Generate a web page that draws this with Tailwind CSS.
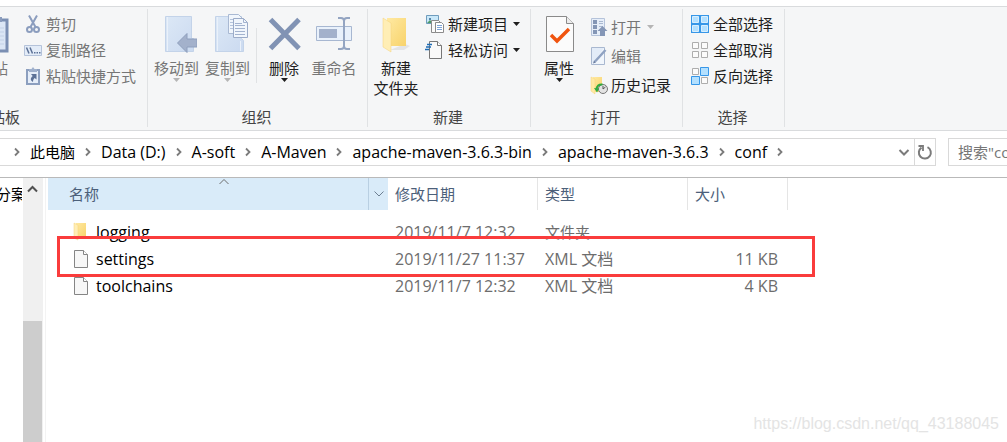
<!DOCTYPE html>
<html lang="zh-CN">
<head>
    <meta charset="UTF-8">
    <meta name="viewport" content="width=device-width, initial-scale=1.0">
    <title>conf</title>
    <script src="https://cdn.jsdelivr.net/npm/@tailwindcss/browser@4"></script>
</head>
<body class="min-h-screen flex flex-col bg-white overflow-hidden whitespace-nowrap font-['Open_Sans','Noto_Sans_CJK_SC',sans-serif] text-[15px] leading-5 text-[#1e1e1e]">

    <!-- Shared shapes -->
    <svg class="absolute size-0">
        <symbol id="crumb" viewBox="0 0 26 10"><path d="M11 1.500 14.500 5 11 8.500" fill="none" stroke="#7b7b7b" stroke-width="1.800"/></symbol>
        <symbol id="caret" viewBox="0 0 7 4"><path d="M0 0h7L3.500 4z" fill="currentColor"/></symbol>
        <symbol id="file" viewBox="0 0 16 20">
            <path d="M1.500 1.500h9l4 4v13h-13z" fill="#f7f7f7" stroke="#858585"/>
            <path d="M10.500 1.500v4h4" fill="#fff" stroke="#858585"/>
        </symbol>
        <linearGradient id="yellow" x1="0" x2="1" y1="0" y2="1"><stop stop-color="#ffe9a2"/><stop offset="1" stop-color="#f8d36b"/></linearGradient>
        <linearGradient id="book" x1="0" x2="1" y1="0" y2="1"><stop stop-color="#dce8f6"/><stop offset="1" stop-color="#cbdaf0"/></linearGradient>
    </svg>

    <!-- Ribbon -->
    <div class="mt-[6px] flex border-y border-[#d9dbdd] bg-[#f5f6f7] pt-[2px] pb-[3px]">
        <section class="w-[148px] overflow-hidden border-r border-[#e0e2e4]">
            <div class="flex h-[98px] justify-end gap-[5px] pr-[11px]">
                <button class="flex w-[50px] shrink-0 flex-col items-center pt-[5px] text-[#767676]">
                    <svg class="mb-1 size-10 shrink-0" viewBox="0 0 40 40">
                        <rect x="6" y="6" width="28" height="31" fill="#dbe6f5" stroke="#7b8fb3" stroke-width="3"/>
                        <path d="M12 3h17v5H12z" fill="#8a9cbd"/>
                        <path d="M10 14h21M10 18h21M10 22h21M10 26h21M10 30h21" stroke="#c3d1e6"/>
                    </svg>
                    粘贴
                </button>
                <div class="flex shrink-0 flex-col pt-[2px] text-[#767676]">
                    <button class="flex h-[26px] items-center gap-[3px]">
                        <svg class="size-5" viewBox="0 0 20 20" fill="none" stroke="#8b9dbe">
                            <path d="M6 1.500 12.500 13M14 1.500 7.500 13" stroke-width="2"/>
                            <circle cx="6.500" cy="15.500" r="2.500" stroke-width="2"/><circle cx="13.500" cy="15.500" r="2.500" stroke-width="2"/>
                        </svg>
                        剪切
                    </button>
                    <button class="flex h-[26px] items-center gap-[3px]">
                        <svg class="size-5" viewBox="0 0 20 20">
                            <path d="M1.500 5.500h17v10h-17z" fill="#e3ecf8" stroke="#b5c3da"/>
                            <path d="m3.500 7.500 2.500 6M7 7.500l2.500 6" stroke="#5d7297" stroke-width="1.500"/>
                            <path d="M11 12h1.500v1.500H11zM13.500 12H15v1.500h-1.500zM16 12h1.500v1.500H16z" fill="#5d7297"/>
                        </svg>
                        复制路径
                    </button>
                    <button class="flex h-[26px] items-center gap-[3px]">
                        <svg class="size-5" viewBox="0 0 20 20">
                            <path d="M4 4h12v14H4z" fill="#e6eef9" stroke="#8c9fbf" stroke-width="2"/>
                            <path d="M6 3h2.500l1.500-2 1.500 2H14v3H6z" fill="#9fb0cc"/>
                            <path d="M8 8h5.500v5.500L11.700 12c-1.200 1-1.700 2-1.700 4C6.800 14 7.500 11.800 9.700 10z" fill="#5d7297"/>
                        </svg>
                        粘贴快捷方式
                    </button>
                </div>
            </div>
            <div class="flex justify-end pr-[127px] text-[#444]">剪贴板</div>
        </section>

        <section class="w-[220px] border-r border-[#e0e2e4]">
            <div class="flex h-[98px] pl-[3px]">
                <button class="flex w-[51px] flex-col items-center pt-[5px] text-[#767676]">
                    <svg class="mb-1 size-10 shrink-0" viewBox="0 0 40 40">
                        <path d="M8.500 2.500h26v22h2v13h-28z" fill="url(#book)" stroke="#c3d3e9"/>
                        <path d="M10.500 3v34" stroke="#eaf1fa"/>
                        <path d="m20.500 29 9.500-9.500V25h10v8H30v5.500z" fill="#a3b1cb" stroke="#8e9fbd"/>
                    </svg>
                    移动到
                    <svg class="h-1 w-[7px] shrink-0 text-[#b5b5b5]"><use href="#caret"/></svg>
                </button>
                <button class="flex w-[51px] flex-col items-center pt-[5px] text-[#767676]">
                    <svg class="mb-1 size-10 shrink-0" viewBox="0 0 40 40">
                        <path d="M7.500 2.500h26v22l2 2v11h-28z" fill="url(#book)" stroke="#c3d3e9"/>
                        <path d="M9.500 3v34M32.500 37V27" stroke="#eaf1fa"/>
                        <path d="M20.500.500h10l4 4v15h-14z" fill="#f1f6fc" stroke="#a9b9d3"/>
                        <path d="M22 5.500h8M22 8.500h8M22 11.500h8M22 14.500h8" stroke="#b5c4dc"/>
                        <path d="M25.500 4.500h10l4 4v15h-14z" fill="#f1f6fc" stroke="#9babc8"/>
                        <path d="M35.500 4.500v4h4M27 9.500h7M27 11.500h10M27 14.500h10M27 17.500h10M27 20.500h10" fill="none" stroke="#a3b3cf"/>
                    </svg>
                    复制到
                    <svg class="h-1 w-[7px] shrink-0 text-[#b5b5b5]"><use href="#caret"/></svg>
                </button>
                <div class="mx-[3px] mt-[19px] h-[55px] w-px bg-[#e0e2e4]"></div>
                <button class="flex w-[48px] flex-col items-center pt-[5px]">
                    <svg class="mb-1 size-10 shrink-0" viewBox="0 0 40 40"><path d="M6.500 5.500 35 34.500M35 5.500 6.500 34.500" stroke="#8193b4" stroke-width="5"/></svg>
                    删除
                    <svg class="h-1 w-[7px] shrink-0"><use href="#caret"/></svg>
                </button>
                <button class="flex w-[52px] flex-col items-center pt-[5px] text-[#767676]">
                    <svg class="mb-1 size-10 shrink-0" viewBox="0 0 40 40">
                        <path d="M2.500 12.500h35v14h-35z" fill="#e9f1fb" stroke="#a7b7d1"/>
                        <path d="M5 15h18v9H5z" fill="#a3b1cb"/>
                        <path d="M24 4h3q3 0 3 3 0-3 3-3h3M30 6v28M24 35h3q3 0 3-3 0 3 3 3h3" fill="none" stroke="#94a5c2" stroke-width="2"/>
                    </svg>
                    重命名
                </button>
            </div>
            <div class="pr-[2px] text-center text-[#444]">组织</div>
        </section>

        <section class="w-[163px] border-r border-[#e0e2e4]">
            <div class="flex h-[98px] gap-1 pl-[3px]">
                <button class="flex w-[50px] flex-col items-center pt-[5px]">
                    <svg class="mb-1 size-10 shrink-0" viewBox="0 0 40 40">
                        <path d="m29 30 5 2-6 4H14z" fill="#e3e4e5"/>
                        <path d="M11 4h19v28H11z" fill="url(#yellow)"/>
                        <path d="m7 4 8 5v29l-8-5z" fill="#ffeeb5" stroke="#f4d37a" stroke-width=".5"/>
                    </svg>
                    <span>新建<br>文件夹</span>
                </button>
                <div class="flex flex-col pt-[2px]">
                    <button class="flex h-[26px] items-center gap-[3px]">
                        <svg class="size-5" viewBox="0 0 20 20">
                            <path d="M1.500 1.500h12v8h-12z" fill="#c9e8f9" stroke="#6f9cbd"/>
                            <path d="m2 9 3-3 3 3z" fill="#4f9a68"/><circle cx="5" cy="5" r="1" fill="#2f6690"/>
                            <path d="M6.500 6.500h7l3 3v9h-10z" fill="#fafafa" stroke="#8b8b8b"/>
                            <path d="M10.500 8.500h6l2 2v8h-8z" fill="#fff" stroke="#8b8b8b"/>
                            <path d="M12 11.500h5M12 13.500h5M12 15.500h5" stroke="#7da5d8"/>
                        </svg>
                        新建项目
                        <svg class="ml-[2px] h-1 w-[7px]"><use href="#caret"/></svg>
                    </button>
                    <button class="flex h-[26px] items-center gap-[3px]">
                        <svg class="size-5" viewBox="0 0 20 20">
                            <path d="M4.500 1.500h8l4 4v13h-12z" fill="#f9f9f9" stroke="#777"/>
                            <path d="M12.500 1.500v4h4" fill="#fff" stroke="#777"/>
                            <path d="M2 4.500h5M1 7h5M0 9.500h4" stroke="#1f6cb5" stroke-width="1.500"/>
                        </svg>
                        轻松访问
                        <svg class="ml-[2px] h-1 w-[7px]"><use href="#caret"/></svg>
                    </button>
                </div>
            </div>
            <div class="pr-[2px] text-center text-[#444]">新建</div>
        </section>

        <section class="w-[152px] border-r border-[#e0e2e4]">
            <div class="flex h-[98px] gap-[6px] pl-[3px]">
                <button class="flex w-[50px] flex-col items-center pt-[5px]">
                    <svg class="mb-1 size-10 shrink-0" viewBox="0 0 40 40">
                        <path d="M7.500 2.500h20l7 7v28h-27z" fill="#fbfbfb" stroke="#8a8a8a"/>
                        <path d="M27.500 2.500v7h7" fill="#ececec" stroke="#8a8a8a"/>
                        <path d="m12 21 6 6 12-12" fill="none" stroke="#f0540f" stroke-width="3.500"/>
                    </svg>
                    属性
                    <svg class="h-1 w-[7px] shrink-0"><use href="#caret"/></svg>
                </button>
                <div class="flex flex-col pt-[3px]">
                    <button class="flex h-[29px] items-center gap-px text-[#767676]">
                        <svg class="size-5" viewBox="0 0 20 20">
                            <path d="M1.500 1.500h13v17h-13z" fill="#e6eef9" stroke="#b5c3da"/>
                            <path d="M3 3h4v4H3zM3 8h4v4H3zM3 13h4v4H3z" fill="#8496b6"/>
                            <path d="M9 4.500h4M9 6.500h4M9 9.500h4" stroke="#a9b8d0"/>
                            <path d="m12.500 9 5 5H15v5h-5v-5H7.500z" fill="#8496b6"/>
                        </svg>
                        打开
                        <svg class="ml-[5px] h-1 w-[7px] text-[#b5b5b5]"><use href="#caret"/></svg>
                    </button>
                    <button class="flex h-[29px] items-center gap-px text-[#767676]">
                        <svg class="size-5" viewBox="0 0 20 20">
                            <path d="M1.500 1.500h13v17h-13z" fill="#e3ecf8" stroke="#a9b8d0"/>
                            <path d="M2 18 14 2v16z" fill="#f1f6fc"/>
                            <path d="M5 15.500 15.500 4" stroke="#8fa2c2" stroke-width="2.500"/>
                            <path d="m3 17.500 1-3 2 2z" fill="#677b9f"/>
                        </svg>
                        编辑
                    </button>
                    <button class="flex h-[29px] items-center gap-px">
                        <svg class="size-5" viewBox="0 0 20 20">
                            <path d="M3 2h9v15H3z" fill="url(#yellow)"/>
                            <path d="m1 2 4 2v15l-4-3z" fill="#ffe9a2" stroke="#f4d37a" stroke-width=".5"/>
                            <circle cx="13" cy="14" r="4.500" fill="#e3e3e3" stroke="#777"/>
                            <path d="M13 11v3l2.500-2" fill="none" stroke="#555"/>
                            <path d="M6.500 15c0-4 2.500-6 6-5.500" fill="none" stroke="#2eaa3f" stroke-width="2"/>
                            <path d="m4 13 5 .500-2 4z" fill="#2eaa3f"/>
                        </svg>
                        历史记录
                    </button>
                </div>
            </div>
            <div class="pr-[2px] text-center text-[#444]">打开</div>
        </section>

        <section class="w-[102px] border-r border-[#e0e2e4]">
            <div class="flex h-[98px] flex-col pt-[2px] pl-[7px]">
                <button class="flex h-[26px] items-center gap-[3px]">
                    <svg class="size-5" viewBox="0 0 20 20">
                        <path d="M1 1h18v18H1z" fill="#3797e8"/>
                        <path d="M2.500 2.500h6v6h-6zM11.500 2.500h6v6h-6zM2.500 11.500h6v6h-6zM11.500 11.500h6v6h-6z" fill="#b3e0ff" stroke="#d8effe"/>
                    </svg>
                    全部选择
                </button>
                <button class="flex h-[26px] items-center gap-[3px]">
                    <svg class="size-5" viewBox="0 0 20 20"><path d="M2.500 2.500h6v6h-6zM11.500 2.500h6v6h-6zM2.500 11.500h6v6h-6zM11.500 11.500h6v6h-6z" fill="#fbfbfb" stroke="#adadad"/></svg>
                    全部取消
                </button>
                <button class="flex h-[26px] items-center gap-[3px]">
                    <svg class="size-5" viewBox="0 0 20 20">
                        <path d="M2.500 2.500h6v6h-6zM11.500 11.500h6v6h-6z" fill="#fbfbfb" stroke="#adadad"/>
                        <path d="M10.500 1.500h8v8h-8zM1.500 10.500h8v8h-8z" fill="#b3e0ff" stroke="#3797e8"/>
                    </svg>
                    反向选择
                </button>
            </div>
            <div class="pr-[2px] text-center text-[#444]">选择</div>
        </section>
    </div>

    <!-- Address bar -->
    <div class="flex gap-3 border-b border-[#b9b9b9] pt-[7px] pb-[11px]">
        <nav class="flex h-7 flex-1 items-center border border-l-0 border-[#d9d9d9] pl-1 text-base leading-5 text-black">
            <svg class="h-[10px] w-[26px]"><use href="#crumb"/></svg>
            <a href="#" class="text-[15px]">此电脑</a>
            <svg class="h-[10px] w-[26px]"><use href="#crumb"/></svg>
            <a href="#">Data (D:)</a>
            <svg class="h-[10px] w-[26px]"><use href="#crumb"/></svg>
            <a href="#">A-soft</a>
            <svg class="h-[10px] w-[26px]"><use href="#crumb"/></svg>
            <a href="#">A-Maven</a>
            <svg class="h-[10px] w-[26px]"><use href="#crumb"/></svg>
            <a href="#">apache-maven-3.6.3-bin</a>
            <svg class="h-[10px] w-[26px]"><use href="#crumb"/></svg>
            <a href="#">apache-maven-3.6.3</a>
            <svg class="h-[10px] w-[26px]"><use href="#crumb"/></svg>
            <a href="#">conf</a>
            <svg class="h-[10px] w-[26px]"><use href="#crumb"/></svg>
            <button class="ml-auto flex h-full w-5 items-center justify-center" aria-label="展开">
                <svg class="size-3" viewBox="0 0 12 12"><path d="m1.500 4 4.500 4.500L10.500 4" fill="none" stroke="#7b7b7b" stroke-width="2"/></svg>
            </button>
            <button class="flex h-full w-[21px] items-center justify-center border-l border-[#d9d9d9]" aria-label="刷新">
                <svg class="size-4" viewBox="0 0 16 16">
                    <path d="M10.500 3.200A6 6 0 1 1 4.500 3.600" fill="none" stroke="#7b7b7b" stroke-width="2"/>
                    <path d="M1.500 2H6v5" fill="none" stroke="#7b7b7b" stroke-width="1.800"/>
                </svg>
            </button>
        </nav>
        <input type="text" aria-label="搜索" placeholder='搜索"conf"' class="h-7 w-[59px] border border-r-0 border-[#d9d9d9] pl-[9px] outline-none placeholder:text-[#767676]">
    </div>

    <main class="relative flex flex-1">
        <!-- Folder tree, scrolled to its right end -->
        <aside class="flex w-[46px] shrink-0 border-r border-[#f3f3f3]">
            <div class="flex w-[22px] justify-center overflow-hidden pt-[6px] text-black">分案</div>
            <div class="ml-px w-5 bg-[#f0f0f0]">
                <svg class="mt-[5px] ml-1 size-3" viewBox="0 0 12 12"><path d="M1 8.500 5.500 4 10 8.500" fill="none" stroke="#505050" stroke-width="2"/></svg>
                <div class="mt-[126px] h-[calc(100%-143px)] w-[19px] bg-[#cdcdcd]"></div>
            </div>
        </aside>

        <div class="pl-[2px]">
            <table class="w-[740px] table-fixed border-separate border-spacing-0">
                <thead>
                    <tr class="h-8 text-left text-[#4c607a]">
                        <th class="w-[340px] bg-[#d9ebf9] p-0 font-normal">
                            <div class="flex h-8">
                                <div class="grid flex-1 grid-cols-[1fr_12px_1fr] border-r border-[#b9cfe2]">
                                    <span class="pt-[6px] pl-[21px]">名称</span>
                                    <svg class="ml-[16px] h-[7px] w-[12px]" viewBox="0 0 12 7"><path d="m1.500 6 4.500-4.500L10.500 6" fill="none" stroke="#6d6d6d"/></svg>
                                </div>
                                <button class="flex w-[19px] items-center justify-center" aria-label="筛选">
                                    <svg class="h-[6px] w-[10px]" viewBox="0 0 10 6"><path d="m.500.500 4.500 4.500L9.500.500" fill="none" stroke="#6d7f92"/></svg>
                                </button>
                            </div>
                        </th>
                        <th class="w-[150px] border-r border-[#e5e5e5] p-0 pl-[7px] font-normal">修改日期</th>
                        <th class="w-[150px] border-r border-[#e5e5e5] p-0 pl-[7px] font-normal">类型</th>
                        <th class="w-[100px] border-r border-[#e5e5e5] p-0 pl-[7px] font-normal">大小</th>
                    </tr>
                </thead>
                <tbody class="text-base leading-5 text-[#6d6d6d] before:block before:h-2">
                    <tr class="h-[27px]">
                        <td class="p-0 text-black">
                            <div class="flex items-center gap-[7px] pl-[25px]">
                                <svg class="h-5 w-4" viewBox="0 0 16 20">
                                    <path d="M3 1h10v15H3z" fill="url(#yellow)"/>
                                    <path d="m1 1 4 2v15l-4-2z" fill="#ffeeb5" stroke="#f4d37a" stroke-width=".5"/>
                                </svg>
                                logging
                            </div>
                        </td>
                        <td class="p-0 pl-[7px]">2019/11/7 12:32</td>
                        <td class="p-0 pl-[7px] text-[15px]">文件夹</td>
                        <td></td>
                    </tr>
                    <tr class="h-[27px]">
                        <td class="p-0 text-black">
                            <div class="flex items-center gap-[7px] pl-[25px]">
                                <svg class="h-5 w-4"><use href="#file"/></svg>
                                settings
                            </div>
                        </td>
                        <td class="p-0 pl-[7px]">2019/11/27 11:37</td>
                        <td class="p-0 pl-[7px]">XML 文档</td>
                        <td class="p-0 pr-[10px] text-right">11 KB</td>
                    </tr>
                    <tr class="h-[27px]">
                        <td class="p-0 text-black">
                            <div class="flex items-center gap-[7px] pl-[25px]">
                                <svg class="h-5 w-4"><use href="#file"/></svg>
                                toolchains
                            </div>
                        </td>
                        <td class="p-0 pl-[7px]">2019/11/7 12:32</td>
                        <td class="p-0 pl-[7px]">XML 文档</td>
                        <td class="p-0 pr-[10px] text-right">4 KB</td>
                    </tr>
                </tbody>
            </table>
        </div>

        <!-- Highlight around the settings row -->
        <div class="pointer-events-none absolute top-[58px] left-[57px] h-[41px] w-[758px] border-3 border-[#fa3c3c]"></div>

        <div class="absolute right-2 bottom-[6px] font-['Liberation_Sans',sans-serif] text-base text-[#e4e4e4]">https://blog.csdn.net/qq_43188045</div>
    </main>
</body>
</html>
